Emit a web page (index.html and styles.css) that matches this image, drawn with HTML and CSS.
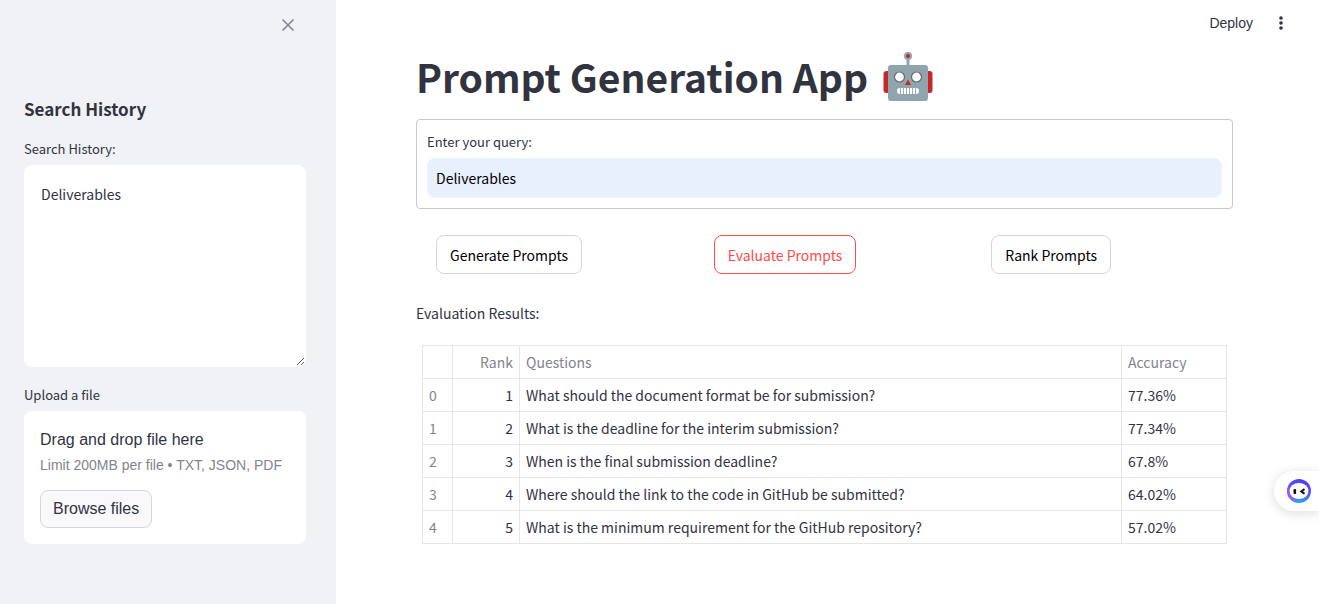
FILE: index.html
```html
<!DOCTYPE html>
<html lang="en">
<head>
<meta charset="utf-8">
<meta name="viewport" content="width=device-width, initial-scale=1">
<title>Prompt Generation App</title>
<link rel="stylesheet" href="styles.css">
</head>
<body>
<div class="app">
  <aside class="sidebar">
    <div class="sidebar-top">
      <button class="icon-button" type="button" aria-label="Close sidebar">
        <svg width="14" height="14" viewBox="0 0 14 14" fill="none" stroke="#808495" stroke-width="1.6"><path d="M1.5 1.5l11 11M12.5 1.5l-11 11"/></svg>
      </button>
    </div>
    <h2 class="sidebar-title">Search History</h2>
    <div class="field">
      <label class="label" for="history">Search History:</label>
      <textarea class="history" id="history">Deliverables</textarea>
    </div>
    <div class="field">
      <span class="label" id="upload-label">Upload a file</span>
      <section class="uploader" aria-labelledby="upload-label">
        <p class="drop-text">Drag and drop file here</p>
        <p class="drop-limit">Limit 200MB per file • TXT, JSON, PDF</p>
        <button class="button browse" type="button">Browse files</button>
      </section>
    </div>
  </aside>

  <div class="page">
    <header class="toolbar">
      <button class="deploy" type="button">Deploy</button>
      <button class="icon-button" type="button" aria-label="Main menu">
        <svg width="16" height="16" viewBox="0 0 16 16" fill="#31333f"><circle cx="8" cy="3" r="1.8"/><circle cx="8" cy="8" r="1.8"/><circle cx="8" cy="13" r="1.8"/></svg>
      </button>
    </header>
    <main class="content">
      <h1 class="title">Prompt Generation App
        <svg class="robot" width="50" height="50" viewBox="0 0 50 50" role="img" aria-label="Robot">
          <rect x="0.5" y="19" width="7" height="22" rx="3" fill="#c62828"/>
          <rect x="42.500" y="19" width="7" height="22" rx="3" fill="#c62828"/>
          <rect x="23.500" y="5" width="3" height="10" fill="#90a4ae"/>
          <circle cx="25" cy="4" r="4" fill="#90a4ae"/>
          <circle cx="25" cy="4" r="2" fill="#c62828"/>
          <rect x="5" y="13" width="40" height="36" rx="3" fill="#90a4ae"/>
          <circle cx="16.500" cy="25" r="5" fill="#fff" stroke="#686868" stroke-width="1.2"/>
          <circle cx="33.500" cy="25" r="5" fill="#fff" stroke="#686868" stroke-width="1.2"/>
          <path d="M25 27.500l3 5.500h-6z" fill="#c62828"/>
          <rect x="14" y="36" width="22" height="6" rx="3" fill="#fff"/>
          <path d="M17.500 36v6M20.500 36v6M23.500 36v6M26.500 36v6M29.500 36v6M32.500 36v6" stroke="#90a4ae" stroke-width="0.9"/>
        </svg>
      </h1>
      <form class="query-form">
        <label class="label" for="query">Enter your query:</label>
        <input class="query" id="query" type="text" value="Deliverables">
      </form>
      <div class="actions">
        <div class="action"><button class="button" type="button">Generate Prompts</button></div>
        <div class="action"><button class="button button-active" type="button">Evaluate Prompts</button></div>
        <div class="action"><button class="button" type="button">Rank Prompts</button></div>
      </div>
      <p class="results-label">Evaluation Results:</p>
      <div class="results-wrap">
        <table class="results">
          <thead>
            <tr><th class="index"></th><th class="rank" scope="col">Rank</th><th scope="col">Questions</th><th class="accuracy" scope="col">Accuracy</th></tr>
          </thead>
          <tbody>
            <tr><th scope="row">0</th><td class="rank">1</td><td>What should the document format be for submission?</td><td>77.36%</td></tr>
            <tr><th scope="row">1</th><td class="rank">2</td><td>What is the deadline for the interim submission?</td><td>77.34%</td></tr>
            <tr><th scope="row">2</th><td class="rank">3</td><td>When is the final submission deadline?</td><td>67.8%</td></tr>
            <tr><th scope="row">3</th><td class="rank">4</td><td>Where should the link to the code in GitHub be submitted?</td><td>64.02%</td></tr>
            <tr><th scope="row">4</th><td class="rank">5</td><td>What is the minimum requirement for the GitHub repository?</td><td>57.02%</td></tr>
          </tbody>
        </table>
      </div>
    </main>
  </div>
</div>
<button class="assistant" type="button" aria-label="Open assistant">
  <svg width="24" height="24" viewBox="0 0 24 24">
    <defs>
      <linearGradient id="ring" x1="0.8" y1="0" x2="0.4" y2="1"><stop offset="0" stop-color="#4a3cf5"/><stop offset="0.45" stop-color="#5b50f6"/><stop offset="1" stop-color="#20b4ee"/></linearGradient>
      <radialGradient id="glow" cx="0.05" cy="0.72" r="0.5"><stop offset="0" stop-color="#b84be8"/><stop offset="1" stop-color="#b84be8" stop-opacity="0"/></radialGradient>
    </defs>
    <circle cx="12" cy="12" r="12" fill="url(#ring)"/>
    <circle cx="12" cy="12" r="12" fill="url(#glow)"/>
    <ellipse cx="12" cy="12" rx="9.500" ry="8" fill="#fff"/>
    <rect x="6.500" y="10" width="2.600" height="5" rx="1" fill="#111"/>
    <path d="M17.500 10l-3.200 2.400 3.200 2.400" fill="none" stroke="#111" stroke-width="2"/>
  </svg>
</button>
</body>
</html>
```
FILE: styles.css
```css
* { box-sizing: border-box; }

body {
  margin: 0;
  background: #fff;
  color: #31333f;
  font-family: "Source Sans Pro", "Noto Sans CJK SC", sans-serif;
  font-size: 14px;
  line-height: 24px;
}

h1, h2, p { margin: 0; }

button, input, textarea { font: inherit; color: inherit; }

button { cursor: pointer; }

.app { display: flex; min-height: 100vh; }

.sidebar {
  flex: 0 0 336px;
  padding: 0 30px 24px 24px;
  background: #f0f2f6;
}

.sidebar-top {
  display: flex;
  justify-content: flex-end;
  align-items: center;
  height: 50px;
  padding-right: 6px;
}

.icon-button {
  display: flex;
  align-items: center;
  justify-content: center;
  width: 24px;
  height: 24px;
  padding: 0;
  border: 0;
  background: none;
}

.sidebar-title {
  margin: 47px 0 18px;
  font-size: 17px;
  font-weight: 600;
  line-height: 24px;
}

.field { margin-bottom: 18px; }

.label {
  display: block;
  margin-bottom: 6px;
  font-size: 13px;
  line-height: 20px;
}

.history {
  display: block;
  width: 100%;
  height: 202px;
  padding: 16px;
  border: 1px solid #fff;
  border-radius: 8px;
  background: #fff;
  resize: vertical;
}

.uploader {
  padding: 16px;
  border-radius: 8px;
  background: #fff;
  font-family: "Liberation Sans", Arial, sans-serif;
}

.drop-text {
  margin-bottom: 2px;
  font-size: 16px;
  line-height: 26px;
}

.drop-limit {
  margin-bottom: 15px;
  color: #83848c;
  font-size: 14px;
  line-height: 20px;
  white-space: nowrap;
}

.button {
  height: 39px;
  padding: 0 13px;
  border: 1px solid #d6d6d9;
  border-radius: 8px;
  background: #fff;
  color: #000;
}

.button-active { border-color: #ff4b4b; color: #ff4b4b; }

.browse {
  display: block;
  height: 38px;
  padding: 0 12px;
  background: #f9f9fb;
  color: #31333f;
  font-size: 16px;
}

.page { flex: 1; min-width: 0; }

.toolbar {
  display: flex;
  justify-content: flex-end;
  align-items: center;
  gap: 16px;
  height: 46px;
  padding-right: 26px;
}

.deploy {
  padding: 0;
  border: 0;
  background: none;
  font-family: "Liberation Sans", Arial, sans-serif;
  font-size: 14px;
}

.content { padding: 4px 86px 48px 80px; }

.title {
  display: flex;
  align-items: flex-end;
  gap: 15px;
  margin-bottom: 17px;
  font-size: 39px;
  font-weight: 700;
  line-height: 52px;
}

.query-form {
  padding: 12px 10px 10px;
  border: 1px solid #c9cacd;
  border-radius: 4px;
}

.query {
  display: block;
  width: 100%;
  height: 40px;
  padding: 0 8px;
  border: 1px solid #f0f2f6;
  border-radius: 8px;
  background: #e8f0fe;
  color: #000;
}

.actions {
  display: grid;
  grid-template-columns: repeat(3, 1fr);
  gap: 16px;
  margin: 26px 0 27px;
}

.action { padding-left: 20px; }

.action .button { display: block; }

.results-label { margin-bottom: 20px; }

.results-wrap { padding: 0 6px; }

.results {
  width: 100%;
  border-spacing: 0;
  border-top: 1px solid #e6e6e8;
  border-left: 1px solid #e6e6e8;
  table-layout: fixed;
}

.results th,
.results td {
  height: 33px;
  padding: 0 6px;
  border-right: 1px solid #e6e6e8;
  border-bottom: 1px solid #e6e6e8;
  text-align: left;
}

.results th { color: #83848c; font-weight: 400; }

.results .index { width: 30px; }

.results .rank { width: 67px; text-align: right; }

.results .accuracy { width: 105px; }

.assistant {
  position: fixed;
  top: 471px;
  right: 0;
  display: flex;
  align-items: center;
  width: 45px;
  height: 40px;
  padding: 0 0 0 13px;
  border: 0;
  border-radius: 20px 0 0 20px;
  background: #fff;
  box-shadow: 0 2px 12px rgba(0, 0, 0, 0.14);
}
```
